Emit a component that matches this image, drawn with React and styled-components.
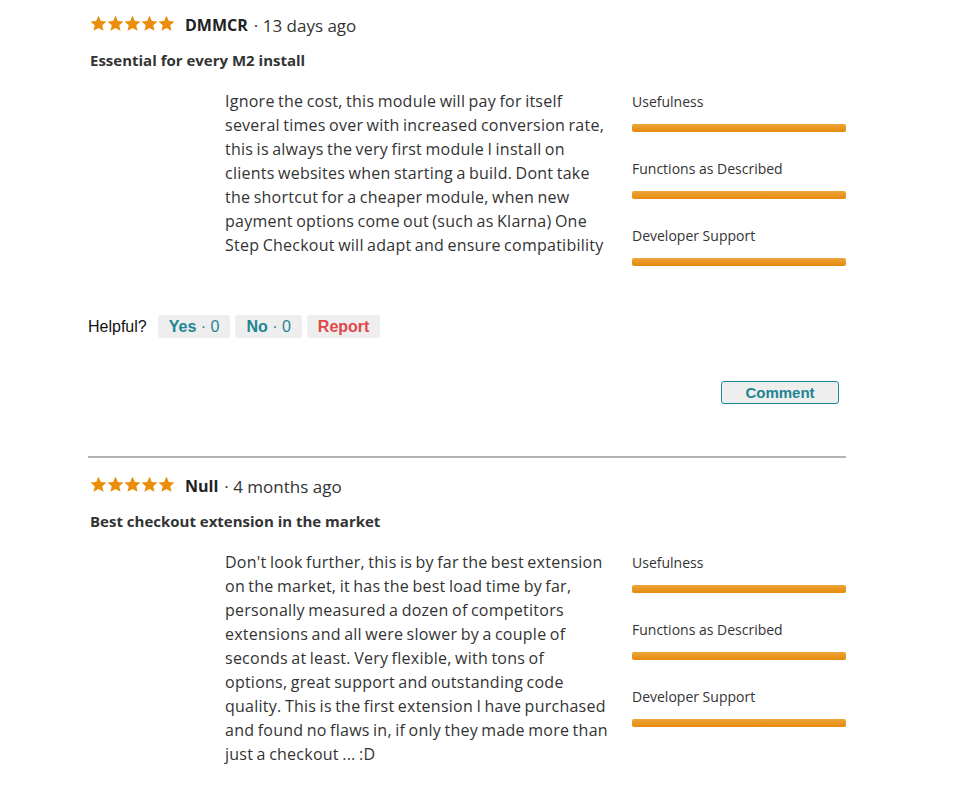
import React from "react";
import styled, { createGlobalStyle } from "styled-components";

const GlobalStyle = createGlobalStyle`
  body {
    margin: 0;
    background: #fff;
    font-family: "Open Sans", "Liberation Sans", sans-serif;
    color: #333;
  }
`;

const reviews = [
  {
    author: "DMMCR",
    when: "13 days ago",
    title: "Essential for every M2 install",
    text:
      "Ignore the cost, this module will pay for itself several times over with increased conversion rate, this is always the very first module I install on clients websites when starting a build. Dont take the shortcut for a cheaper module, when new payment options come out (such as Klarna) One Step Checkout will adapt and ensure compatibility",
    actions: true,
  },
  {
    author: "Null",
    when: "4 months ago",
    title: "Best checkout extension in the market",
    text:
      "Don't look further, this is by far the best extension on the market, it has the best load time by far, personally measured a dozen of competitors extensions and all were slower by a couple of seconds at least. Very flexible, with tons of options, great support and outstanding code quality. This is the first extension I have purchased and found no flaws in, if only they made more than just a checkout ... :D",
    actions: false,
  },
];

const criteria = ["Usefulness", "Functions as Described", "Developer Support"];

const Star = () => (
  <svg width="17" height="17" viewBox="0 0 24 24">
    <path
      d="M12 1l3.3 7.3 8 .8-6 5.3 1.8 7.9L12 18.2l-7.1 4.1 1.8-7.9-6-5.3 8-.8z"
      fill="#ea8d0a"
    />
  </svg>
);

const App = () => (
  <>
    <GlobalStyle />
    <Page>
      {reviews.map((r, i) => (
        <React.Fragment key={r.author}>
          {i > 0 && <Divider />}
          <Review>
            <Header>
              <Stars>
                {[0, 1, 2, 3, 4].map((n) => (
                  <Star key={n} />
                ))}
              </Stars>
              <Author>{r.author}</Author>
              <When>· {r.when}</When>
            </Header>
            <Title>{r.title}</Title>
            <Body>
              <Text>{r.text}</Text>
              <Ratings>
                {criteria.map((c) => (
                  <Rating key={c}>
                    <RatingLabel>{c}</RatingLabel>
                    <Bar />
                  </Rating>
                ))}
              </Ratings>
            </Body>
            {r.actions && (
              <>
                <Helpful>
                  <HelpfulLabel>Helpful?</HelpfulLabel>
                  <VoteButton>
                    Yes <Count>· 0</Count>
                  </VoteButton>
                  <VoteButton>
                    No <Count>· 0</Count>
                  </VoteButton>
                  <VoteButton $danger>Report</VoteButton>
                </Helpful>
                <CommentRow>
                  <CommentButton>Comment</CommentButton>
                </CommentRow>
              </>
            )}
          </Review>
        </React.Fragment>
      ))}
    </Page>
  </>
);

const Page = styled.div`
  width: 758px;
  padding: 12px 0 0 88px;
`;

const Review = styled.div`
  display: flex;
  flex-direction: column;
`;

const Header = styled.div`
  display: flex;
  align-items: center;
  height: 26px;
  padding-left: 2px;
`;

const Stars = styled.div`
  display: flex;
  margin-right: 10px;
  margin-top: -4px;
`;

const Author = styled.span`
  font-weight: 700;
  font-size: 16px;
  color: #222;
  margin-right: 6px;
`;

const When = styled.span`
  font-size: 17px;
  color: #333;
`;

const Title = styled.h3`
  margin: 10px 0 0 2px;
  font-size: 15px;
  font-weight: 700;
  color: #333;
  line-height: 24px;
`;

const Body = styled.div`
  display: flex;
  margin-top: 17px;
  padding-left: 137px;
`;

const Text = styled.p`
  margin: 0;
  width: 383px;
  font-size: 16px;
  line-height: 24px;
  letter-spacing: 0.25px;
  word-spacing: -1px;
  color: #333;
`;

const Ratings = styled.div`
  display: flex;
  flex-direction: column;
  margin-left: 24px;
  padding-top: 3px;
  width: 214px;
`;

const Rating = styled.div`
  display: flex;
  flex-direction: column;
  height: 67px;
`;

const RatingLabel = styled.span`
  font-size: 14px;
  line-height: 20px;
  color: #333;
`;

const Bar = styled.div`
  margin-top: 12px;
  height: 8px;
  border-radius: 2px;
  background: linear-gradient(#eda43c, #e58a0c);
`;

const Helpful = styled.div`
  display: flex;
  align-items: center;
  gap: 5px;
  margin-top: 22px;
  font-family: "Liberation Sans", Arial, sans-serif;
`;

const HelpfulLabel = styled.span`
  font-size: 16px;
  color: #111;
  margin-right: 6px;
`;

const VoteButton = styled.button`
  height: 23px;
  padding: 0 11px;
  border: none;
  border-radius: 3px;
  background: #eeeeee;
  font-family: "Liberation Sans", Arial, sans-serif;
  font-size: 16px;
  font-weight: 700;
  color: ${(p) => (p.$danger ? "#e2464a" : "#1d8593")};
`;

const Count = styled.span`
  font-weight: 400;
`;

const CommentRow = styled.div`
  display: flex;
  justify-content: flex-end;
  margin-top: 43px;
  padding-right: 7px;
`;

const CommentButton = styled.button`
  width: 118px;
  height: 23px;
  border: 1px solid #1d8593;
  border-radius: 3px;
  background: #eeeeee;
  font-family: "Liberation Sans", Arial, sans-serif;
  font-size: 15px;
  font-weight: 700;
  color: #1d8593;
  padding: 0;
`;

const Divider = styled.hr`
  margin: 52px 0 15px;
  border: none;
  height: 2px;
  background: #b3b3b3;
`;

export default App;
